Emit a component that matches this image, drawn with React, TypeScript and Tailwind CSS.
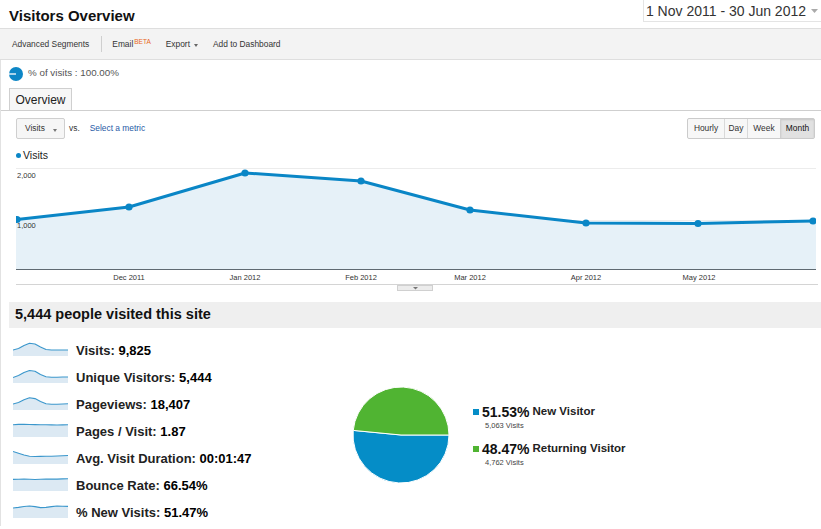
import React from "react";

const chartPts: [number, number][] = [
  [17, 219.5],
  [129, 207],
  [245, 173],
  [361, 181],
  [470, 210],
  [586, 223],
  [698, 223.5],
  [813, 221],
];

const xLabels: [string, number][] = [
  ["Dec 2011", 129],
  ["Jan 2012", 245],
  ["Feb 2012", 361],
  ["Mar 2012", 470],
  ["Apr 2012", 586],
  ["May 2012", 699],
];

function Chart() {
  const line = chartPts.map((p) => p.join(",")).join(" ");
  const area = `M16,269 L16,${chartPts[0][1]} L${line.split(" ").join(" L")} L816,220.5 L816,269 Z`;
  return (
    <svg width={821} height={132} viewBox="0 162 821 132" className="block">
      <defs>
        <clipPath id="plot">
          <rect x={16} y={162} width={800} height={108} />
        </clipPath>
      </defs>
      <line x1={16} x2={816} y1={168.5} y2={168.5} stroke="#ececec" strokeWidth={1} />
      <line x1={16} x2={816} y1={220.5} y2={220.5} stroke="#ececec" strokeWidth={1} />
      <g clipPath="url(#plot)">
        <path d={area} fill="#e6f1f8" />
        <polyline points={line} fill="none" stroke="#0a86c6" strokeWidth={3} strokeLinejoin="round" />
        {chartPts.map((p, i) => (
          <circle key={i} cx={p[0]} cy={p[1]} r={3.6} fill="#0a86c6" />
        ))}
      </g>
      <line x1={16} x2={816} y1={269.5} y2={269.5} stroke="#5f6a72" strokeWidth={1} />
      <text x={17} y={178} fontSize={7.5} fill="#333" fontFamily="'Liberation Sans', Arial, sans-serif">2,000</text>
      <text x={17} y={228} fontSize={7.5} fill="#333" fontFamily="'Liberation Sans', Arial, sans-serif">1,000</text>
      {xLabels.map(([t, x]) => (
        <text key={t} x={x} y={279.5} fontSize={7.5} fill="#333" textAnchor="middle" fontFamily="'Liberation Sans', Arial, sans-serif">
          {t}
        </text>
      ))}
      <line x1={16} x2={818} y1={284.5} y2={284.5} stroke="#d4d4d4" strokeWidth={1} />
      <rect x={397.5} y={285.5} width={35} height={5} fill="#ececec" stroke="#d0d0d0" strokeWidth={1} />
      <path d="M413,287 L418,287 L415.5,289.5 Z" fill="#777" />
    </svg>
  );
}

function Spark({ pts }: { pts: number[] }) {
  const step = 55 / (pts.length - 1);
  const coords = pts.map((y, i) => `${(i * step).toFixed(2)},${y}`);
  const area = `M0,14 L${coords.join(" L")} L55,14 Z`;
  return (
    <svg width={55} height={14} className="block shrink-0 mb-[3px]">
      <path d={area} fill="#dce9f3" />
      <polyline points={coords.join(" ")} fill="none" stroke="#3b97cc" strokeWidth={1.1} strokeLinejoin="round" />
    </svg>
  );
}

const metrics: { label: string; value: string; pts: number[] }[] = [
  { label: "Visits:", value: "9,825", pts: [8, 6.5, 3.5, 1.2, 2, 5, 7.5, 8, 8, 8, 8] },
  { label: "Unique Visitors:", value: "5,444", pts: [8.5, 6.5, 3.5, 1.5, 2.2, 5.5, 7.7, 8.2, 8.2, 8, 8] },
  { label: "Pageviews:", value: "18,407", pts: [8, 6.5, 3.8, 1.8, 2.6, 5.5, 7.8, 8.3, 8.2, 8, 7.8] },
  { label: "Pages / Visit:", value: "1.87", pts: [1.8, 1.4, 1.2, 1.5, 1.6, 1.8, 1.7, 1.9, 2, 1.9, 1.8] },
  { label: "Avg. Visit Duration:", value: "00:01:47", pts: [1.5, 3.2, 5, 6.2, 6.5, 6.4, 6.2, 6.3, 6, 5.8, 5.5] },
  { label: "Bounce Rate:", value: "66.54%", pts: [2.4, 2.2, 2, 2.3, 2.5, 2.3, 2.1, 2, 2.1, 1.9, 1.8] },
  { label: "% New Visits:", value: "51.47%", pts: [4, 3.4, 2.5, 2, 2.6, 3.6, 3.4, 2.6, 2, 2.2, 2.4] },
];

function Pie() {
  const cx = 48;
  const r = 48;
  const a = (185.5 * Math.PI) / 180;
  const ex = cx + r * Math.cos(a);
  const ey = cx + r * Math.sin(a);
  return (
    <svg width={96} height={96} className="block shrink-0 mt-[50px]">
      <path d={`M${cx},${cx} L${cx + r},${cx} A${r},${r} 0 1,1 ${ex},${ey} Z`} fill="#058dc7" stroke="#fff" strokeWidth={1} />
      <path d={`M${cx},${cx} L${ex},${ey} A${r},${r} 0 0,1 ${cx + r},${cx} Z`} fill="#50b432" stroke="#fff" strokeWidth={1} />
    </svg>
  );
}

export default function App() {
  return (
    <div className="w-[821px] h-[529px] overflow-hidden bg-white text-[#222] font-['Liberation_Sans',Arial,sans-serif]">
      {/* header */}
      <div className="h-[28px] flex justify-between items-start">
        <div className="pl-[9px] pt-[7px] leading-[18px] text-[15px] font-bold text-[#111]">Visitors Overview</div>
        <div className="h-[22px] flex items-center border-l border-b border-[#e4e4e4] pl-[2px] pr-[3px] pt-[1px]">
          <span className="text-[14px] text-[#333] leading-[20px]">1 Nov 2011 - 30 Jun 2012</span>
          <svg width={7} height={4} className="ml-[5px] block">
            <path d="M0,0 L7,0 L3.5,4 Z" fill="#aaa" />
          </svg>
        </div>
      </div>

      {/* toolbar */}
      <div className="h-[32px] bg-[#f3f3f3] border-y border-[#dedede] flex items-center text-[8.4px] text-[#333]">
        <span className="ml-[12px]">Advanced Segments</span>
        <span className="ml-[12px] w-px h-[16px] bg-[#cfcfcf]" />
        <span className="ml-[10px]">Email</span>
        <span className="ml-[1px] text-[6.5px] text-[#e8661c] -mt-[4px]">BETA</span>
        <span className="ml-[15px]">Export</span>
        <svg width={4} height={3} className="ml-[4px] mt-[3px] block">
          <path d="M0,0 L4,0 L2,3 Z" fill="#666" />
        </svg>
        <span className="ml-[15px]">Add to Dashboard</span>
      </div>

      {/* body */}
      <div className="border-l border-[#e2e2e2]">
        {/* segment */}
        <div className="h-[27px] flex items-center pl-[8px]">
          <svg width={14} height={14} className="block">
            <circle cx={7} cy={7} r={7} fill="#0d86c6" />
            <line x1={0} y1={7} x2={7} y2={7} stroke="#fff" strokeWidth={1.3} />
          </svg>
          <span className="ml-[5px] text-[9.8px] text-[#555]">% of visits : 100.00%</span>
        </div>

        {/* tab row */}
        <div className="h-[24px] border-b border-[#cfcfcf] flex items-end pl-[8px]">
          <div className="w-[63px] h-[22px] border border-b-0 border-[#cfcfcf] bg-[#f7f7f7] flex items-center justify-center text-[12px] text-[#222]">
            Overview
          </div>
        </div>

        {/* controls */}
        <div className="mt-[7px] h-[21px] flex items-center justify-between pl-[15px] pr-[6px]">
          <div className="flex items-center text-[8.4px]">
            <div className="w-[49px] h-[21px] border border-[#cfcfcf] rounded-[2px] bg-[#f6f6f6] flex items-center pl-[8px]">
              <span className="text-[#333]">Visits</span>
              <svg width={4} height={3} className="ml-[8px] mt-[3px] block">
                <path d="M0,0 L4,0 L2,3 Z" fill="#777" />
              </svg>
            </div>
            <span className="ml-[4px] text-[#333]">vs.</span>
            <span className="ml-[10px] text-[#1f5aa6]">Select a metric</span>
          </div>
          <div className="flex h-[21px] border border-[#cbcbcb] rounded-[2px] text-[8.4px] text-[#333] bg-[#f7f7f7]">
            <div className="w-[36px] flex items-center justify-center">Hourly</div>
            <div className="w-[23px] flex items-center justify-center border-l border-[#d9d9d9]">Day</div>
            <div className="w-[33px] flex items-center justify-center border-l border-[#d9d9d9]">Week</div>
            <div className="w-[34px] flex items-center justify-center border-l border-[#cfcfcf] bg-[#e1e1e1] shadow-[inset_0_1px_2px_rgba(0,0,0,0.12)] text-[#111]">
              Month
            </div>
          </div>
        </div>

        {/* legend */}
        <div className="h-[23px] pt-[10px] pl-[15px] flex items-start">
          <div className="flex items-center h-[12px]">
            <span className="w-[5px] h-[5px] rounded-full bg-[#0a86c6]" />
            <span className="ml-[2px] text-[10.5px] leading-[12px] text-[#222]">Visits</span>
          </div>
        </div>

        {/* chart */}
        <div className="-ml-px">
          <Chart />
        </div>

        {/* summary */}
        <div className="mt-[8px] ml-[8px] h-[26px] bg-[#efefef] flex items-center pl-[6px]">
          <span className="text-[14.5px] font-bold text-[#111]">5,444 people visited this site</span>
        </div>

        <div className="mt-[9px] flex">
          <div className="w-[352px] shrink-0">
            {metrics.map((m) => (
              <div key={m.label} className="h-[27px] flex items-center pl-[12px]">
                <Spark pts={m.pts} />
                <span className="ml-[8px] text-[13px] font-bold text-[#222] whitespace-nowrap">
                  {m.label} <span className="text-[#000]">{m.value}</span>
                </span>
              </div>
            ))}
          </div>
          <Pie />
          <div className="ml-[24px] mt-[67px]">
            <div className="flex items-center h-[16px]">
              <span className="w-[6px] h-[6px] bg-[#058dc7]" />
              <span className="ml-[3px] text-[14px] font-bold text-[#111]">51.53%</span>
              <span className="ml-[3px] text-[11.5px] font-bold text-[#222]">New Visitor</span>
            </div>
            <div className="mt-[1px] h-[10px] leading-[10px] pl-[12px] text-[7.5px] text-[#444]">5,063 Visits</div>
            <div className="mt-[10px] flex items-center h-[16px]">
              <span className="w-[6px] h-[6px] bg-[#50b432]" />
              <span className="ml-[3px] text-[14px] font-bold text-[#111]">48.47%</span>
              <span className="ml-[3px] text-[11.5px] font-bold text-[#222]">Returning Visitor</span>
            </div>
            <div className="mt-[1px] h-[10px] leading-[10px] pl-[12px] text-[7.5px] text-[#444]">4,762 Visits</div>
          </div>
        </div>
      </div>
    </div>
  );
}
